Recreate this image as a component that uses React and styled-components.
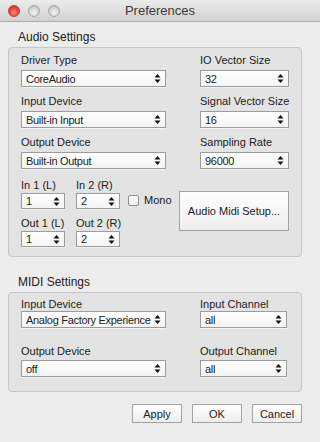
import React, { useState } from 'react';
import styled, { createGlobalStyle } from 'styled-components';

const GlobalStyle = createGlobalStyle`
  html, body {
    margin: 0;
    padding: 0;
    background: #ececec;
  }
  body {
    font-family: "Liberation Sans", Arial, sans-serif;
    font-size: 11px;
    color: #1c1c1c;
  }
`;

const Window = styled.div`
  width: 320px;
  height: 442px;
  display: flex;
  flex-direction: column;
  background: #ececec;
  overflow: hidden;
`;

const TitleBar = styled.div`
  height: 21px;
  display: flex;
  align-items: center;
  background: linear-gradient(#ebebeb, #d2d2d2);
  border-bottom: 1px solid #a9a9a9;
`;

const Lights = styled.div`
  width: 60px;
  display: flex;
  gap: 8px;
  padding-left: 8px;
  box-sizing: border-box;
`;

const Light = styled.span`
  width: 12px;
  height: 12px;
  border-radius: 50%;
  box-sizing: border-box;
  border: 1px solid ${({ $red }) => ($red ? '#b8403a' : '#a6a6a6')};
  background: ${({ $red }) =>
    $red
      ? 'radial-gradient(circle at 50% 65%, #ff8a80 0%, #e8453c 55%, #b92d26 100%)'
      : 'radial-gradient(circle at 50% 65%, #f4f4f4 0%, #d4d4d4 55%, #a9a9a9 100%)'};
`;

const Title = styled.div`
  flex: 1;
  text-align: center;
  font-size: 13px;
  color: #3a3a3a;
  padding-right: 60px;
`;

const Body = styled.div`
  padding: 8px 18px 0 8px;
  display: flex;
  flex-direction: column;
`;

const SectionTitle = styled.div`
  font-size: 12px;
  line-height: 14px;
  margin: ${({ $first }) => ($first ? '0' : '18px')} 0 3px 10px;
  color: #222;
`;

const Group = styled.div`
  border: 1px solid #c6c6c6;
  border-radius: 4px;
  background: #e3e3e3;
  padding: ${({ $pad }) => $pad};
`;

const FieldGrid = styled.div`
  display: grid;
  grid-template-columns: 145px ${({ $right }) => $right}px;
  column-gap: 34px;
  row-gap: ${({ $gap }) => $gap}px;
`;

const FieldBox = styled.div`
  display: flex;
  flex-direction: column;
`;

const Label = styled.div`
  line-height: 14px;
  white-space: nowrap;
`;

const SelectBox = styled.div`
  margin-top: ${({ $mt }) => $mt}px;
  height: ${({ $h }) => $h}px;
  box-sizing: border-box;
  border: 1px solid #9c9c9c;
  background: linear-gradient(#ffffff, #f4f4f4);
  box-shadow: inset 0 1px 0 #fff, 0 1px 0 rgba(255, 255, 255, 0.5);
  display: flex;
  align-items: center;
  padding: 0 4px 0 4px;
  white-space: nowrap;
`;

const SelectText = styled.span`
  flex: 1;
  overflow: hidden;
  letter-spacing: -0.3px;
`;

const ArrowIcon = () => (
  <svg width="7" height="11" viewBox="0 0 7 11">
    <path d="M3.5 1 L6.5 4.5 L0.5 4.5 Z" fill="#111" />
    <path d="M0.5 6.5 L6.5 6.5 L3.5 10 Z" fill="#111" />
  </svg>
);

const Select = ({ value, mt = 3, h = 17 }) => (
  <SelectBox $mt={mt} $h={h}>
    <SelectText>{value}</SelectText>
    <ArrowIcon />
  </SelectBox>
);

const Field = ({ label, value, mt }) => (
  <FieldBox>
    <Label>{label}</Label>
    <Select value={value} mt={mt} />
  </FieldBox>
);

const ChannelRow = styled.div`
  display: flex;
  align-items: flex-start;
  margin-top: 9px;
`;

const ChannelGrid = styled.div`
  display: grid;
  grid-template-columns: 44px 44px;
  column-gap: 11px;
  row-gap: 7px;
`;

const MonoLabel = styled.label`
  display: flex;
  align-items: center;
  gap: 5px;
  margin: 16px 0 0 8px;
  line-height: 12px;
`;

const CheckBox = styled.span`
  width: 11px;
  height: 11px;
  box-sizing: border-box;
  border: 1px solid #8f8f8f;
  border-radius: 2px;
  background: linear-gradient(#ffffff, #ececec);
  display: flex;
  align-items: center;
  justify-content: center;
  font-size: 9px;
  line-height: 9px;
`;

const PushButton = styled.button`
  font-family: "Liberation Sans", Arial, sans-serif;
  font-size: 11px;
  color: #1c1c1c;
  width: ${({ $w }) => $w}px;
  height: ${({ $h }) => $h}px;
  box-sizing: border-box;
  border: 1px solid #a3a3a3;
  border-radius: 0;
  background: linear-gradient(#ffffff, #ededed);
  padding: 0;
  cursor: pointer;
`;

const SetupButton = styled(PushButton)`
  margin: 13px 0 0 auto;
`;

const Footer = styled.div`
  display: flex;
  justify-content: flex-end;
  gap: 10px;
  margin-top: 12px;
`;

export default function App() {
  const [mono, setMono] = useState(false);

  return (
    <Window>
      <GlobalStyle />
      <TitleBar>
        <Lights>
          <Light $red />
          <Light />
          <Light />
        </Lights>
        <Title>Preferences</Title>
      </TitleBar>

      <Body>
        <SectionTitle $first>Audio Settings</SectionTitle>
        <Group $pad="5px 12px 9px 12px">
          <FieldGrid $right={89} $gap={7}>
            <Field label="Driver Type" value="CoreAudio" />
            <Field label="IO Vector Size" value="32" />
            <Field label="Input Device" value="Built-in Input" />
            <Field label="Signal Vector Size" value="16" />
            <Field label="Output Device" value="Built-in Output" />
            <Field label="Sampling Rate" value="96000" />
          </FieldGrid>

          <ChannelRow>
            <ChannelGrid>
              <FieldBox>
                <Label>In 1 (L)</Label>
                <Select value="1" mt={1} h={16} />
              </FieldBox>
              <FieldBox>
                <Label>In 2 (R)</Label>
                <Select value="2" mt={1} h={16} />
              </FieldBox>
              <FieldBox>
                <Label>Out 1 (L)</Label>
                <Select value="1" mt={1} h={16} />
              </FieldBox>
              <FieldBox>
                <Label>Out 2 (R)</Label>
                <Select value="2" mt={1} h={16} />
              </FieldBox>
            </ChannelGrid>
            <MonoLabel onClick={() => setMono(!mono)}>
              <CheckBox>{mono ? '✓' : ''}</CheckBox>
              Mono
            </MonoLabel>
            <SetupButton $w={110} $h={40}>Audio Midi Setup...</SetupButton>
          </ChannelRow>
        </Group>

        <SectionTitle>MIDI Settings</SectionTitle>
        <Group $pad="4px 12px 14px 12px">
          <FieldGrid $right={87} $gap={16}>
            <Field label="Input Device" value="Analog Factory Experience" mt={0} />
            <Field label="Input Channel" value="all" mt={0} />
            <Field label="Output Device" value="off" mt={2} />
            <Field label="Output Channel" value="all" mt={2} />
          </FieldGrid>
        </Group>

        <Footer>
          <PushButton $w={50} $h={19}>Apply</PushButton>
          <PushButton $w={50} $h={19}>OK</PushButton>
          <PushButton $w={50} $h={19}>Cancel</PushButton>
        </Footer>
      </Body>
    </Window>
  );
}
